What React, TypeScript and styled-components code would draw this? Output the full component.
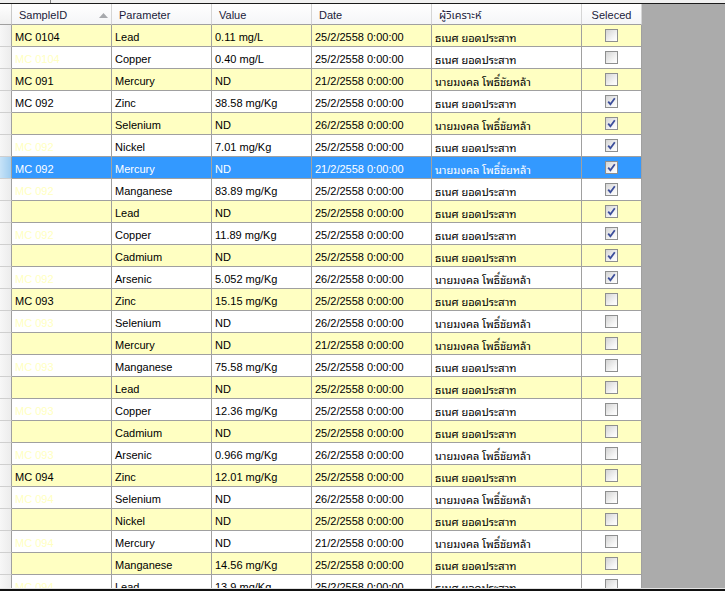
import React from "react";
import styled, { createGlobalStyle } from "styled-components";

const Global = createGlobalStyle`
  html, body { margin: 0; padding: 0; background: #f0f0f0; }
  body { width: 725px; height: 591px; overflow: hidden; font-family: "Liberation Sans", Arial, "Noto Sans Thai", "Noto Sans Thai Looped", "Loma", "Garuda", sans-serif; font-size: 11px; }
`;

const COLS = "12px 100px 100px 100px 120px 150px 60px";
const YELLOW = "#ffffc2";
const GRID = "#a0a0a0";

const Page = styled.div`
  width: 725px;
  height: 591px;
  display: flex;
  flex-direction: column;
  background: #f0f0f0;
`;

const TopStrip = styled.div`
  height: 3px;
  display: flex;
  background: #f0f0f0;
`;

const Tick = styled.div`
  width: 1px;
  margin-left: 50px;
  background: #808080;
`;

const Frame = styled.div`
  flex: 1;
  display: flex;
  flex-direction: column;
  border-top: 1px solid #1a1a1a;
  border-bottom: 2px solid #111;
  min-height: 0;
`;

const Inner = styled.div`
  flex: 1;
  display: flex;
  min-height: 0;
  overflow: hidden;
  border-bottom: 1px solid #e3e3e3;
`;

const Grid = styled.div`
  width: 642px;
  display: flex;
  flex-direction: column;
  background: #fff;
  overflow: hidden;
`;

const Filler = styled.div`
  flex: 1;
  background: #ababab;
`;

const HeaderRow = styled.div`
  display: grid;
  grid-template-columns: ${COLS};
  height: 21px;
  flex: none;
  background: linear-gradient(#ffffff, #f4f5f7);
`;

const HeadCell = styled.div<{ $center?: boolean }>`
  display: flex;
  align-items: center;
  justify-content: ${(p) => (p.$center ? "center" : "space-between")};
  padding-top: 2px;
  padding-left: ${(p) => (p.$center ? "0" : "7px")};
  padding-right: ${(p) => (p.$center ? "0" : "3px")};
  border-right: 1px solid #d5d5d5;
  border-bottom: 1px solid ${GRID};
  color: #1b1b3a;
  white-space: nowrap;
  overflow: hidden;
`;

const Corner = styled.div`
  background: linear-gradient(#ffffff, #f0f0f0);
  border-right: 1px solid #c9c9c9;
  border-bottom: 1px solid ${GRID};
`;

const Row = styled.div<{ $bg: string }>`
  display: grid;
  grid-template-columns: ${COLS};
  height: 22px;
  flex: none;
  background: ${(p) => p.$bg};
`;

const RowHead = styled.div<{ $active?: boolean }>`
  background: ${(p) =>
    p.$active ? "linear-gradient(90deg, #c7e3f8, #9fcdf0)" : "linear-gradient(90deg, #f7f7f7, #ececec)"};
  border-right: 1px solid ${GRID};
  border-bottom: 1px solid #cfcfcf;
`;

const Cell = styled.div<{ $color: string; $thai?: boolean; $center?: boolean }>`
  display: flex;
  align-items: center;
  justify-content: ${(p) => (p.$center ? "center" : "flex-start")};
  padding-left: ${(p) => (p.$center ? "0" : "3px")};
  padding-top: ${(p) => (p.$center ? "0" : "2px")};
  border-right: 1px solid ${GRID};
  border-bottom: 1px solid ${GRID};
  color: ${(p) => p.$color};
  white-space: nowrap;
  overflow: hidden;
  font-family: ${(p) =>
    p.$thai
      ? `"Noto Sans Thai Looped", "Loma", "Garuda", "Noto Sans Thai", "Liberation Sans", sans-serif`
      : `"Liberation Sans", Arial, sans-serif`};
  font-size: 11px;
`;

const Box = styled.div`
  width: 11px;
  height: 11px;
  border: 1px solid #8e8f8f;
  background: linear-gradient(135deg, #d4d4d4, #f6f6f6 70%, #ffffff);
  display: flex;
  align-items: center;
  justify-content: center;
`;

const Check = ({ on }: { on: boolean }) => (
  <Box>
    {on && (
      <svg width="9" height="9" viewBox="0 0 9 9">
        <path d="M1.2 4.6 L3.4 7.2 L7.8 1.2" fill="none" stroke="#3c4e9b" strokeWidth="1.8" />
      </svg>
    )}
  </Box>
);

const SortUp = () => (
  <svg width="9" height="5" viewBox="0 0 9 5">
    <path d="M0 5 L4.5 0 L9 5 Z" fill="#a7a9ad" />
  </svg>
);

type Vis = "show" | "faint" | "hidden";
type R = [string, Vis, string, string, string, string, boolean];

const T = "ธเนศ ยอดประสาท";
const M = "นายมงคล โพธิ์ชัยหล้า";
const D25 = "25/2/2558 0:00:00";
const D21 = "21/2/2558 0:00:00";
const D26 = "26/2/2558 0:00:00";

const rows: R[] = [
  ["MC 0104", "show", "Lead", "0.11 mg/L", D25, T, false],
  ["MC 0104", "faint", "Copper", "0.40 mg/L", D25, T, false],
  ["MC 091", "show", "Mercury", "ND", D21, M, false],
  ["MC 092", "show", "Zinc", "38.58 mg/Kg", D25, T, true],
  ["MC 092", "hidden", "Selenium", "ND", D26, M, true],
  ["MC 092", "faint", "Nickel", "7.01 mg/Kg", D25, T, true],
  ["MC 092", "show", "Mercury", "ND", D21, M, true],
  ["MC 092", "faint", "Manganese", "83.89 mg/Kg", D25, T, true],
  ["MC 092", "hidden", "Lead", "ND", D25, T, true],
  ["MC 092", "faint", "Copper", "11.89 mg/Kg", D25, T, true],
  ["MC 092", "hidden", "Cadmium", "ND", D25, T, true],
  ["MC 092", "faint", "Arsenic", "5.052 mg/Kg", D26, M, true],
  ["MC 093", "show", "Zinc", "15.15 mg/Kg", D25, T, false],
  ["MC 093", "faint", "Selenium", "ND", D26, M, false],
  ["MC 093", "hidden", "Mercury", "ND", D21, M, false],
  ["MC 093", "faint", "Manganese", "75.58 mg/Kg", D25, T, false],
  ["MC 093", "hidden", "Lead", "ND", D25, T, false],
  ["MC 093", "faint", "Copper", "12.36 mg/Kg", D25, T, false],
  ["MC 093", "hidden", "Cadmium", "ND", D25, T, false],
  ["MC 093", "faint", "Arsenic", "0.966 mg/Kg", D26, M, false],
  ["MC 094", "show", "Zinc", "12.01 mg/Kg", D25, T, false],
  ["MC 094", "faint", "Selenium", "ND", D26, M, false],
  ["MC 094", "hidden", "Nickel", "ND", D25, T, false],
  ["MC 094", "faint", "Mercury", "ND", D21, M, false],
  ["MC 094", "hidden", "Manganese", "14.56 mg/Kg", D25, T, false],
  ["MC 094", "faint", "Lead", "13.9 mg/Kg", D25, T, false],
];

const SELECTED = 6;

export default function App() {
  return (
    <Page>
      <Global />
      <TopStrip>
        <Tick />
      </TopStrip>
      <Frame>
        <Inner>
          <Grid>
            <HeaderRow>
              <Corner />
              <HeadCell>
                <span>SampleID</span>
                <SortUp />
              </HeadCell>
              <HeadCell>Parameter</HeadCell>
              <HeadCell>Value</HeadCell>
              <HeadCell>Date</HeadCell>
              <HeadCell>ผู้วิเคราะห์</HeadCell>
              <HeadCell $center>Seleced</HeadCell>
            </HeaderRow>
            {rows.map((r, i) => {
              const sel = i === SELECTED;
              const bg = sel ? "#3399ff" : i % 2 === 0 ? YELLOW : "#ffffff";
              const fg = sel ? "#ffffff" : "#000000";
              const idColor = sel ? "#ffffff" : r[1] === "show" ? "#000000" : YELLOW;
              return (
                <Row key={i} $bg={bg}>
                  <RowHead $active={sel} />
                  <Cell $color={idColor}>{r[0]}</Cell>
                  <Cell $color={fg}>{r[2]}</Cell>
                  <Cell $color={fg}>{r[3]}</Cell>
                  <Cell $color={fg}>{r[4]}</Cell>
                  <Cell $color={fg} $thai>
                    {r[5]}
                  </Cell>
                  <Cell $color={fg} $center>
                    <Check on={r[6]} />
                  </Cell>
                </Row>
              );
            })}
          </Grid>
          <Filler />
        </Inner>
      </Frame>
    </Page>
  );
}
